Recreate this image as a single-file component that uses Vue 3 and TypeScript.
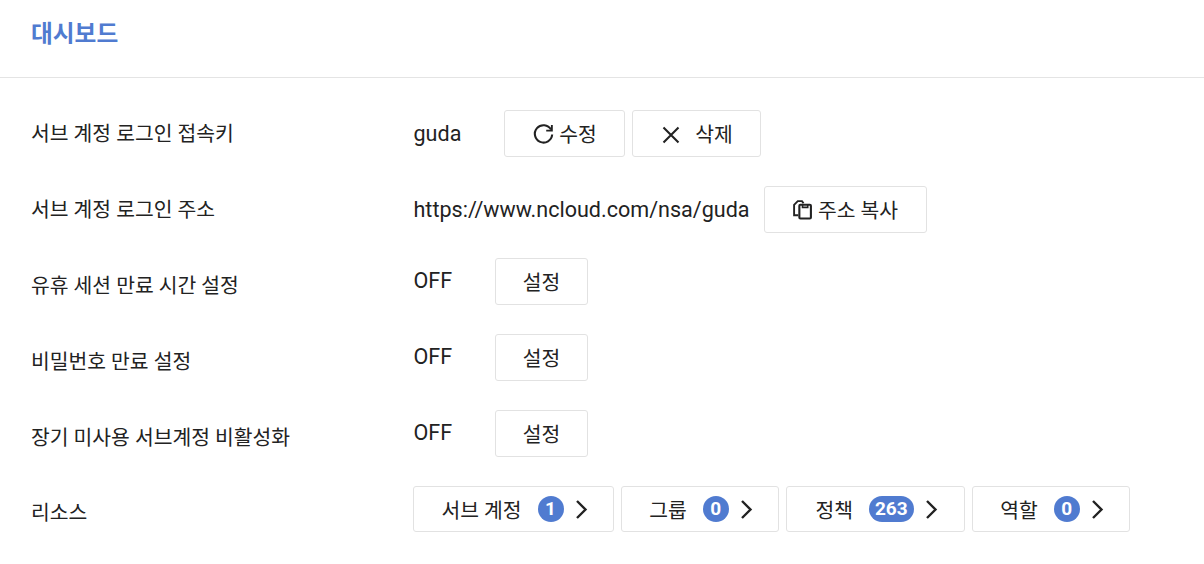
<script setup lang="ts">
const resources = [
  { name: '서브 계정', count: '1' },
  { name: '그룹', count: '0' },
  { name: '정책', count: '263' },
  { name: '역할', count: '0' },
]
const offRows = ['유휴 세션 만료 시간 설정', '비밀번호 만료 설정', '장기 미사용 서브계정 비활성화']
</script>

<template>
  <div class="page">
    <header class="head"><h1>대시보드</h1></header>
    <main class="rows">
      <div class="row">
        <div class="label">서브 계정 로그인 접속키</div>
        <div class="value">
          <span class="text key">guda</span>
          <button class="btn edit">
            <svg width="23" height="23" viewBox="0 0 22 22" fill="none" stroke="#222" stroke-width="2"><path d="M18.2 7.2A8.3 8.3 0 1 0 19.3 12" /><path d="M19 2.8v5.4h-5.4" stroke-width="1.8" /></svg>
            <span class="lift">수정</span>
          </button>
          <button class="btn del">
            <svg class="x" width="18" height="18" viewBox="0 0 18 18" fill="none" stroke="#222" stroke-width="2.1"><path d="M1.5 1.5l15 15M16.5 1.5l-15 15" /></svg>
            <span class="lift">삭제</span>
          </button>
        </div>
      </div>
      <div class="row">
        <div class="label">서브 계정 로그인 주소</div>
        <div class="value">
          <span class="text url">https://www.ncloud.com/nsa/guda</span>
          <button class="btn copy">
            <svg width="21" height="21" viewBox="0 0 20 20" fill="none" stroke="#222" stroke-width="2"><path d="M6 15.5H2V5.5L5.5 2H9.5L11 4" stroke-width="1.8" /><rect x="7" y="5.5" width="11" height="13" rx="1" /><path d="M10 5v3h5V5" stroke-width="1.5" /></svg>
            <span class="lift">주소 복사</span>
          </button>
        </div>
      </div>
      <div v-for="r in offRows" :key="r" class="row off">
        <div class="label">{{ r }}</div>
        <div class="value">
          <span class="text state">OFF</span>
          <button class="btn set"><span class="lift">설정</span></button>
        </div>
      </div>
      <div class="row res">
        <div class="label">리소스</div>
        <div class="value chips">
          <button v-for="c in resources" :key="c.name" class="btn chip">
            <span class="cname">{{ c.name }}</span>
            <span class="badge">{{ c.count }}</span>
            <svg width="13" height="21" viewBox="0 0 13 21" fill="none" stroke="#222" stroke-width="2.4"><path d="M2 2l8.5 8.5L2 19" /></svg>
          </button>
        </div>
      </div>
    </main>
  </div>
</template>

<style>
html, body { margin: 0; background: #fff; }
</style>

<style scoped>
.page {
  width: 1204px;
  height: 564px;
  overflow: hidden;
  font-family: Roboto, "Noto Sans CJK KR", sans-serif;
  color: #222;
  font-size: 20.4px;
}
.head {
  height: 77px;
  border-bottom: 1px solid #e4e4e4;
  padding-left: 31px;
  display: flex;
  align-items: center;
}
.head h1 {
  margin: 0 0 13px;
  font-size: 23.7px;
  font-weight: 700;
  color: #507bd0;
}
.rows { padding-top: 32px; }
.row {
  display: flex;
  height: 76px;
  padding-left: 31px;
}
.label {
  width: 383px;
  height: 47px;
  line-height: 49px;
  white-space: nowrap;
}
.res .label { line-height: 47px; }
.value {
  display: flex;
  align-items: center;
  height: 47px;
}
.off .value { margin-top: -4px; }
.text { white-space: nowrap; font-size: 21.55px; margin-left: -0.5px; }
.key { width: 90.5px; }
.url { margin-right: 14px; }
.state { width: 81.5px; margin-top: -3px; }
.btn {
  box-sizing: border-box;
  height: 47px;
  background: #fff;
  border: 1px solid #e2e2e2;
  border-radius: 3px;
  font: inherit;
  color: inherit;
  display: flex;
  align-items: center;
  justify-content: center;
  padding: 0;
}
.lift { margin-bottom: 2px; }
.edit { width: 121px; margin-right: 7px; gap: 4px; }
.del { width: 129px; gap: 15px; padding-left: 2px; }
.x { margin-top: 3px; }
.copy { width: 163px; gap: 5px; }
.set { width: 93px; }
.chips { gap: 7px; height: 46px; margin: -4px 0 0 -1px; }
.chip { height: 46px; padding-left: 2px; width: 158px; }
.chip:nth-child(1) { width: 201px; }
.chip:nth-child(3) { width: 179px; }
.badge {
  background: #507bd0;
  color: #fff;
  font-size: 19px;
  font-weight: 700;
  height: 26px;
  min-width: 26px;
  padding: 0 6px;
  box-sizing: border-box;
  border-radius: 13px;
  line-height: 26px;
  margin: 0 11px 0 16px;
}
</style>
